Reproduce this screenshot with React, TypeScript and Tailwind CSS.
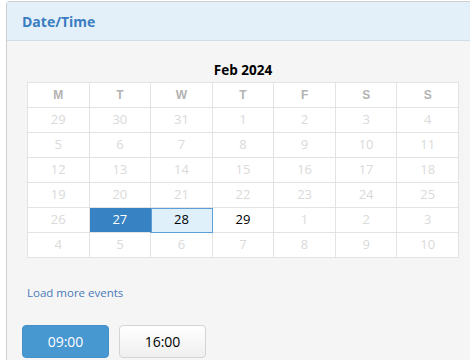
const weekdays = ['M', 'T', 'W', 'T', 'F', 'S', 'S'];

const days = [
    29, 30, 31, 1, 2, 3, 4,
    5, 6, 7, 8, 9, 10, 11,
    12, 13, 14, 15, 16, 17, 18,
    19, 20, 21, 22, 23, 24, 25,
    26, 27, 28, 29, 1, 2, 3,
    4, 5, 6, 7, 8, 9, 10,
];

function dayClass(i: number) {
    if (i === 29) return 'bg-[#3682c3] text-white border-r-[#3682c3]';
    if (i === 30) return 'bg-[#dff0fb] text-black outline outline-1 outline-[#5b9fd6] -outline-offset-1';
    if (i === 31) return 'bg-white text-black';
    return 'bg-white text-[#dadada]';
}

export default function App() {
    return (
        <div className="w-[470px] h-[360px] overflow-hidden bg-white pl-[6px] pt-[1px] font-['Open_Sans',sans-serif]">
            <div className="w-[480px] h-[380px] border border-[#cfcfcf] rounded-tl-[3px] bg-[#f5f5f5]">
                {/* header */}
                <div className="h-[39px] bg-[#e3f0f9] border-b border-[#cfdde8] pl-[15px] flex items-center">
                    <span className="text-[14px] font-bold text-[#3b7dc1]">Date/Time</span>
                </div>

                <div className="pt-[20px] pl-[20px]">
                    <div className="w-[432px] text-center text-[13.5px] leading-[18px] font-bold text-black">Feb 2024</div>

                    <div className="mt-[3px] w-[432px] grid grid-cols-7 border-l border-t border-[#e3e3e3] bg-white">
                        {weekdays.map((d, i) => (
                            <div
                                key={i}
                                className="h-[25px] border-r border-b border-[#e3e3e3] flex items-center justify-center text-[12px] font-bold text-[#b3b3b3] font-['Liberation_Sans',sans-serif]"
                            >
                                {d}
                            </div>
                        ))}
                        {days.map((d, i) => (
                            <div
                                key={i}
                                className={`h-[25px] border-r border-b border-[#e3e3e3] flex items-center justify-center text-[13px] ${dayClass(i)}`}
                            >
                                {d}
                            </div>
                        ))}
                    </div>

                    <div className="mt-[27px] text-[11.5px] leading-[16px] text-[#4a7ab9]">Load more events</div>
                </div>

                {/* time slots */}
                <div className="mt-[24px] pl-[15px] flex gap-[10px]">
                    <button className="w-[87px] h-[33px] rounded-[4px] bg-[#4797d1] border border-[#4590c9] text-white text-[14px]">
                        09:00
                    </button>
                    <button className="w-[87px] h-[33px] rounded-[4px] bg-gradient-to-b from-white to-[#efefef] border border-[#d4d4d4] text-black text-[14px]">
                        16:00
                    </button>
                </div>
            </div>
        </div>
    );
}
